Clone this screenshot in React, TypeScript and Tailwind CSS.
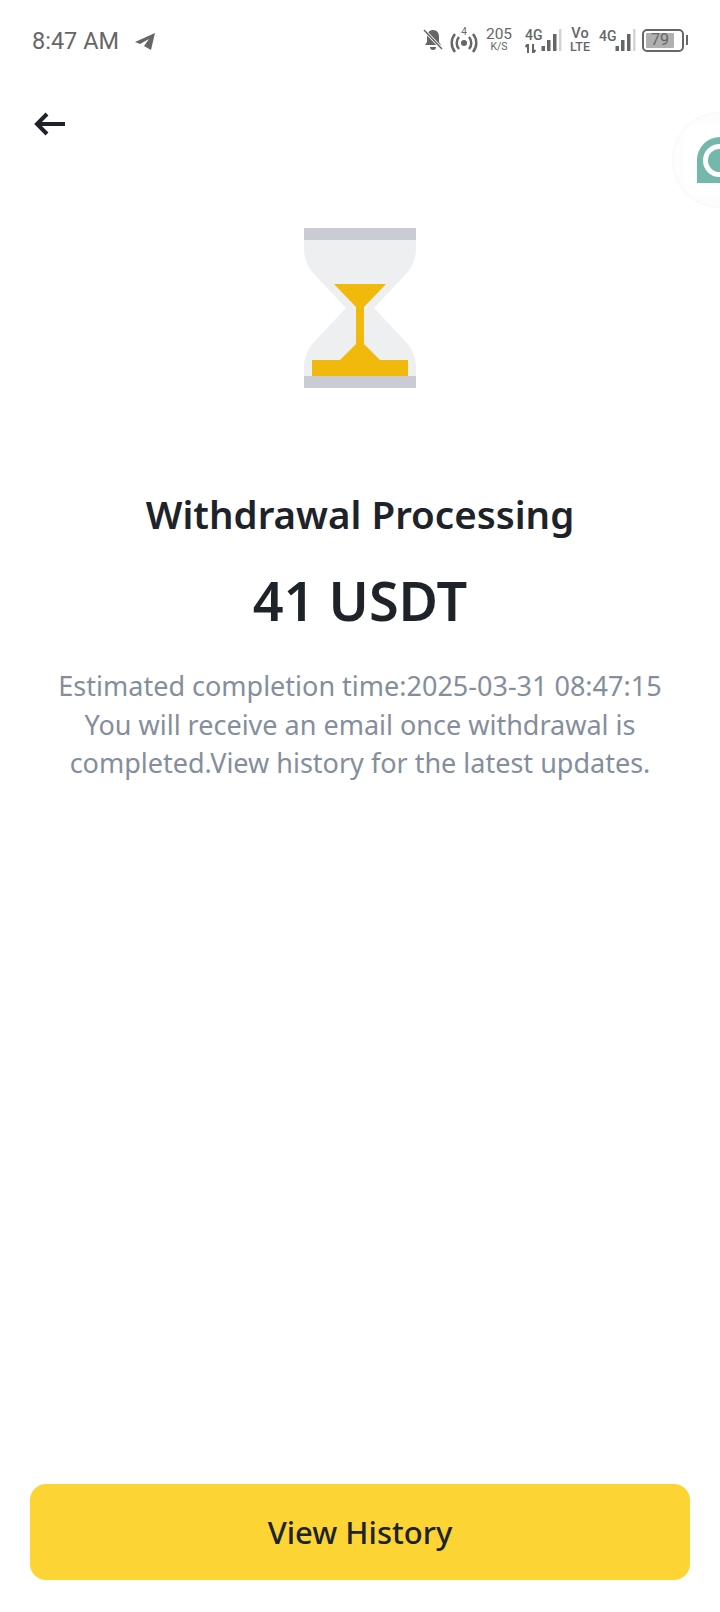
function Bars() {
  return (
    <svg width="21" height="24" viewBox="0 0 21 24">
      <rect x="0.5" y="18" width="3.5" height="5" fill="#666" />
      <rect x="6" y="12" width="3.5" height="11" fill="#666" />
      <rect x="12" y="6" width="3.5" height="17" fill="#666" />
      <rect x="18" y="1" width="2.5" height="22" fill="#d4d4d4" />
    </svg>
  );
}

export default function App() {
  return (
    <div className="relative flex h-[1612px] w-[720px] flex-col overflow-hidden bg-white font-['Noto_Sans',sans-serif] text-[#1e2329]">
      <div className="flex h-[80px] items-center justify-between pl-[32px] pr-[32px]">
        <div className="mt-[3px] flex items-center gap-[16px] font-['Roboto',sans-serif] text-[23.5px] text-[#666]">
          <span>8:47 AM</span>
          <svg width="21" height="18" viewBox="0 0 21 18"><path d="M0 9 20 0 16 17 9 13 14 6 5 11Z" fill="#666" /></svg>
        </div>
        <div className="flex items-center font-['Roboto',sans-serif] text-[#666]">
          <svg width="20" height="24" viewBox="0 0 20 24" className="mr-[7px]"><path d="M10 2c-4 0-6 3-6 7v5l-2 3h16l-2-3V9c0-4-2-7-6-7Z M7 19a3 3 0 0 0 6 0Z" fill="#666" /><path d="M1 2 19 21" stroke="#fff" strokeWidth="3" /><path d="M1 2 19 21" stroke="#666" strokeWidth="1.5" /></svg>
          <svg width="28" height="28" viewBox="0 0 28 28" className="mr-[10px]"><circle cx="14" cy="17" r="3" fill="#666" /><path d="M9 11a9 9 0 0 0 0 12M19 11a9 9 0 0 1 0 12M5 8a14 14 0 0 0 0 18M23 8a14 14 0 0 1 0 18" fill="none" stroke="#666" strokeWidth="2.5" /><text x="14" y="9" fontSize="10" fontFamily="Roboto" textAnchor="middle" fill="#666">4</text></svg>
          <div className="mr-[15px] flex w-[22px] flex-col items-center leading-none">
            <span className="text-[15.5px] leading-[14px]">205</span>
            <span className="text-[10.5px] leading-[12px]">K/S</span>
          </div>
          <div className="flex w-[16px] flex-col items-start leading-none">
            <span className="text-[14px] font-medium leading-[14px]">4G</span>
            <svg width="11" height="9" viewBox="0 0 11 9" className="mt-[2px]"><path d="M3 9V0L0.5 3M8 0V9L10.5 6" fill="none" stroke="#666" strokeWidth="2" /></svg>
          </div>
          <div className="mr-[8px]"><Bars /></div>
          <div className="mr-[9px] flex w-[20px] flex-col items-center font-medium leading-none">
            <span className="text-[14.5px] leading-[14px]">Vo</span>
            <span className="text-[12.5px] leading-[12px]">LTE</span>
          </div>
          <span className="mb-[8px] w-[16px] text-[14px] font-medium leading-none">4G</span>
          <div className="mr-[6px]"><Bars /></div>
          <div className="flex items-center">
            <div className="flex h-[23px] w-[42px] items-center rounded-[5px] border-2 border-[#666] p-[2px]">
              <div className="flex h-full w-[28px] items-center justify-center rounded-[1px] bg-[#b0b0b0] text-[16px]">79</div>
            </div>
            <div className="ml-[2px] h-[10px] w-[2px] bg-[#666]" />
          </div>
        </div>
      </div>

      <div className="flex h-[60px] items-start pl-[32px] pt-[30px]">
        <svg width="36" height="28" viewBox="0 0 36 28"><path d="M33 14H5M15 4 5 14l10 10" fill="none" stroke="#1e2329" strokeWidth="4" /></svg>
      </div>

      <div className="flex flex-col items-center pt-[88px]">
        <svg width="112" height="160" viewBox="0 0 112 160">
          <path d="M0 12H112V20C112 32 108 38 103 45L70 80 103 115C108 122 112 128 112 140V148H0V140C0 128 4 122 9 115L42 80 9 45C4 38 0 32 0 20Z" fill="#eeeff1" />
          <rect width="112" height="12" fill="#c9ccd2" />
          <rect y="148" width="112" height="12" fill="#c9ccd2" />
          <path d="M30 56H82L60 79V116L76 132H104V148H8V132H36L52 116V79Z" fill="#f0b90b" />
        </svg>
        <h1 className="mt-[102px] text-[38.5px] font-semibold leading-[48px]">Withdrawal Processing</h1>
        <div className="mt-[30px] text-[54px] font-semibold leading-[64px]">41 USDT</div>
        <p className="mt-[35px] text-center text-[27px] leading-[38.5px] text-[#848e9c]">
          Estimated completion time:2025-03-31 08:47:15
          <br />
          You will receive an email once withdrawal is
          <br />
          completed.View history for the latest updates.
        </p>
      </div>

      <div className="mt-auto px-[30px] pb-[32px]">
        <div className="flex h-[96px] items-center justify-center rounded-[16px] bg-[#fcd535] text-[31px] font-medium text-[#1e2329]">
          View History
        </div>
      </div>

      <div className="absolute left-[672px] top-[112px] flex h-[96px] w-[96px] items-center rounded-full border border-[#f7f7f7] bg-[#fdfdfd] pl-[10px]">
        <div className="flex h-[74px] w-[80px] items-center rounded-[20px] bg-white pl-[14px]">
          <div className="flex h-[46px] w-[60px] items-center rounded-tl-[23px] bg-[#74b8ab] pl-[6px]">
            <div className="h-[33px] w-[33px] rounded-full border-[5px] border-white" />
          </div>
        </div>
      </div>
    </div>
  );
}
